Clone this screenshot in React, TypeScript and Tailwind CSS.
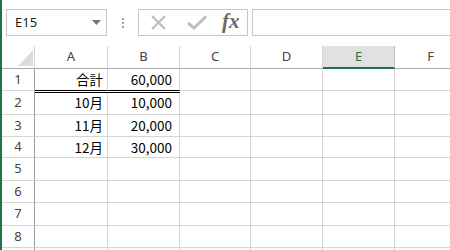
import React from "react";

const ui = { fontFamily: '"Noto Sans", "Open Sans", sans-serif' };
const jp = { fontFamily: '"Noto Sans CJK JP", sans-serif' };

const cols = [
  { k: "A", w: "w-[73px]", pr: "pr-[4px]" },
  { k: "B", w: "w-[72px]", pr: "pr-[7px]" },
  { k: "C", w: "w-[71px]", pr: "pr-[4px]" },
  { k: "D", w: "w-[72px]", pr: "pr-[4px]" },
  { k: "E", w: "w-[72px]", pr: "pr-[4px]" },
  { k: "F", w: "w-[72px]", pr: "pr-[4px]" },
];

const rows: { n: number; label?: string; h: string; a?: string; b?: string }[] = [
  { n: 1, label: "1", h: "h-[22px]", a: "合計", b: "60,000" },
  { n: 2, label: "2", h: "h-[24px]", a: "10月", b: "10,000" },
  { n: 3, label: "3", h: "h-[22px]", a: "11月", b: "20,000" },
  { n: 4, label: "4", h: "h-[21px]", a: "12月", b: "30,000" },
  { n: 5, label: "5", h: "h-[23px]" },
  { n: 6, label: "6", h: "h-[22px]" },
  { n: 7, label: "7", h: "h-[23px]" },
  { n: 8, label: "8", h: "h-[22px]" },
  { n: 9, h: "h-[22px]" },
];

export default function App() {
  return (
    <div className="w-[450px] h-[250px] overflow-hidden flex bg-white">
      <div className="w-[2px] h-full bg-[#217346] shrink-0" />
      <div className="flex flex-col flex-1 min-w-0">
        {/* toolbar */}
        <div className="h-[46px] shrink-0 flex items-start pt-[9px] pl-[4px]">
          <div className="w-[101px] h-[27px] border border-[#c6c6c6] flex items-center justify-between pl-[8px] pr-[5px] shrink-0">
            <span className="text-[13px] text-[#222]" style={ui}>E15</span>
            <svg width="9" height="5" viewBox="0 0 9 5"><path d="M0 0H9L4.5 5Z" fill="#777" /></svg>
          </div>
          <div className="w-[31px] h-[27px] flex flex-col items-center justify-center gap-[2px] shrink-0">
            <div className="w-[2px] h-[2px] bg-[#a0a0a0]" />
            <div className="w-[2px] h-[2px] bg-[#a0a0a0]" />
            <div className="w-[2px] h-[2px] bg-[#a0a0a0]" />
          </div>
          <div className="w-[110px] h-[27px] border border-[#c6c6c6] flex items-center shrink-0">
            <svg className="ml-[12px]" width="15" height="15" viewBox="0 0 15 15">
              <path d="M1 1L14 14M14 1L1 14" stroke="#bdbdbd" strokeWidth="2.2" />
            </svg>
            <svg className="ml-[21px]" width="20" height="15" viewBox="0 0 20 15">
              <path d="M1 8L7 13L19 1.5" stroke="#bdbdbd" strokeWidth="3" fill="none" />
            </svg>
            <span
              className="ml-[15px] text-[21px] italic font-bold text-[#6a6a6a] leading-none pb-[2px]"
              style={{ fontFamily: '"Liberation Serif", serif' }}
            >
              fx
            </span>
          </div>
          <div className="flex-1 h-[27px] border-y border-l border-[#c6c6c6] ml-[4px]" />
        </div>
        {/* header row */}
        <div className="flex h-[23px] shrink-0" style={ui}>
          <div className="w-[33px] shrink-0 border-r border-b border-r-[#d4d4d4] border-b-[#ababab] flex items-end justify-end pb-[2px] pr-[1px]">
            <svg width="15" height="16" viewBox="0 0 15 16"><path d="M0 16H15V0Z" fill="#dcdcdc" /></svg>
          </div>
          {cols.map((c) =>
            c.k === "E" ? (
              <div
                key={c.k}
                className={`${c.w} shrink-0 bg-[#e1e1e1] border-r border-r-[#c6c6c6] border-b-2 border-b-[#217346] flex items-center justify-center text-[13px] text-[#217346]`}
              >
                {c.k}
              </div>
            ) : (
              <div
                key={c.k}
                className={`${c.w} shrink-0 border-r border-b border-r-[#d4d4d4] border-b-[#ababab] flex items-center justify-center text-[13px] text-[#444]`}
              >
                {c.k}
              </div>
            )
          )}
        </div>
        {/* rows */}
        {rows.map((r) => (
          <div key={r.n} className={`flex ${r.h} shrink-0`}>
            <div
              className="w-[33px] shrink-0 border-r border-b border-r-[#9e9e9e] border-b-[#d4d4d4] flex items-center justify-center text-[13px] text-[#444]"
              style={ui}
            >
              {r.label}
            </div>
            {cols.map((c) => {
              const isAB = c.k === "A" || c.k === "B";
              const text = c.k === "A" ? r.a : c.k === "B" ? r.b : undefined;
              let cls = `${c.w} ${c.pr} shrink-0 border-r border-r-[#d4d4d4] flex items-center justify-end text-[13.5px] text-black`;
              if (r.n === 1 && isAB)
                cls += " relative z-10 border-b border-b-black shadow-[0_1px_0_0_#fff,0_2px_0_0_#000]";
              else cls += " border-b border-b-[#d4d4d4]";
              return (
                <div key={c.k} className={cls} style={jp}>
                  {text}
                </div>
              );
            })}
          </div>
        ))}
      </div>
    </div>
  );
}
